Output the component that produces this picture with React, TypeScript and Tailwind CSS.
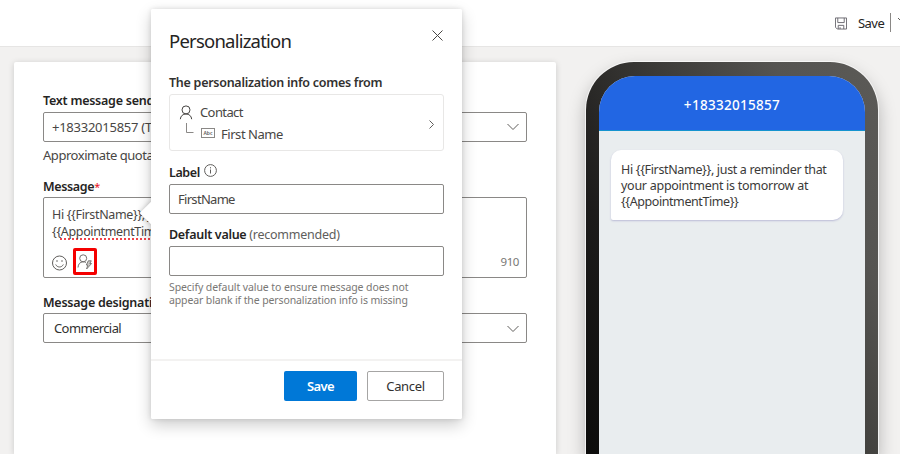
import React from "react";

function Chevron({ className = "" }: { className?: string }) {
  return (
    <svg className={className} width="14" height="8" viewBox="0 0 14 8" fill="none" stroke="#605e5c" strokeWidth="1">
      <path d="M1.500 1l5.500 5.500L12.500 1" />
    </svg>
  );
}

function Person({ className = "" }: { className?: string }) {
  return (
    <svg className={className} width="14" height="15" viewBox="0 0 14 15" fill="none" stroke="#484644" strokeWidth="1">
      <circle cx="7" cy="4.900" r="4" />
      <path d="M1.300 14.200c.3-3.300 2.600-5.200 5.700-5.200s5.400 1.900 5.700 5.200" />
    </svg>
  );
}

function PersonBolt() {
  return (
    <svg className="shrink-0" width="16" height="16" viewBox="0 0 16 16" fill="none" stroke="#716f6d" strokeWidth="1">
      <circle cx="6.200" cy="4.300" r="3.500" />
      <path d="M1 13.500c.2-3.400 2-5.500 5-5.700 1.200 0 2.100.2 2.900.7" />
      <path d="M11.300 6.800h3l-1.500 2.700h1.800l-5 5.500 1.200-4H9.300z" fill="#c8c6c4" strokeWidth=".9" />
    </svg>
  );
}

function Smile() {
  return (
    <svg width="16" height="16" viewBox="0 0 16 16" fill="none" stroke="#605e5c" strokeWidth="1">
      <circle cx="7.500" cy="8" r="7" />
      <path d="M3.700 9.500c1.500 3.300 6.100 3.300 7.600 0" />
      <circle cx="5" cy="6" r=".8" fill="#605e5c" stroke="none" />
      <circle cx="10" cy="6" r=".8" fill="#605e5c" stroke="none" />
    </svg>
  );
}

function Toolbar() {
  return (
    <header className="flex h-[47px] shrink-0 items-center border-b border-[#e6e5e4] bg-white pl-[835px]">
      <svg className="shrink-0" width="12" height="13" viewBox="0 0 13 13" fill="none" stroke="#66646b" strokeWidth="1">
        <path d="M.5 .5h12v12h-10l-2-2z" />
        <path d="M3 .5v5h7v-5M3.500 12.500v-4h6v4M5.500 10.500v2" />
      </svg>
      <span className="ml-[11px] w-[27px] shrink-0 text-[13px] leading-[18px] tracking-[-0.55px] text-[#252423]">Save</span>
      <span className="ml-[5px] mt-[-2px] h-[19px] w-px shrink-0 bg-[#8a8886]" />
      <svg className="mb-[6px] ml-[7px] shrink-0" width="8" height="6" viewBox="0 0 8 6" fill="none" stroke="#605e5c">
        <path d="M0 1l4 4 4-4" />
      </svg>
    </header>
  );
}

function FormCard() {
  return (
    <section className="ml-[14px] mt-[15px] flex h-[392px] w-[542px] shrink-0 flex-col rounded-t-[2px] bg-white pl-[29px] pr-[29px] pt-[29px] shadow-[0_1px_6px_rgba(0,0,0,0.16)]">
      <label className="h-[20px] text-[12.500px] font-semibold leading-[20px] tracking-[-0.25px] text-[#252423]">Text message sender</label>
      <div className="mt-px flex h-[30px] items-center justify-between rounded-[2px] border border-[#8a8886] pl-[8px] pr-[6px] pt-px text-[#484644]">
        <span className="text-[13px] tracking-[-0.25px]">+18332015857 (Toll free)</span>
        <Chevron className="mb-[2px]" />
      </div>
      <p className="mt-[3px] h-[20px] text-[13px] leading-[20px] tracking-[-0.45px] text-[#484644]">Approximate quota remaining</p>
      <label className="mt-[12px] h-[20px] text-[12.500px] font-semibold leading-[20px] tracking-[-0.35px] text-[#252423]">
        Message<span className="text-[11px] font-normal text-[#e81123]">*</span>
      </label>
      <div className="flex h-[81px] flex-col rounded-[2px] border border-[#8a8886] pl-[8px] pr-[7px] pt-[8px] text-[#484644]">
        <div className="h-[35px] text-[12.500px] leading-[17px] tracking-[-0.35px]">
          <p>Hi {"{{FirstName}}"}, just a reminder that</p>
          <p>
            {"{{"}
            <span className="underline decoration-[#f0444a] decoration-dotted decoration-[1.500px] underline-offset-[2px] [text-decoration-skip-ink:none]">AppointmentTime</span>
            {"}}"}
          </p>
        </div>
        <div className="mt-[10px] flex items-center">
          <Smile />
          <span className="ml-[5px] mt-[-3px] flex h-[27px] w-[24px] items-center justify-center rounded-[2px] border-[3px] border-[#f40000]">
            <PersonBolt />
          </span>
          <span className="ml-auto mt-[-2px] text-[11.500px] tracking-[-0.45px] text-[#797775]">910</span>
        </div>
      </div>
      <label className="mt-[14px] h-[20px] text-[12.500px] font-semibold leading-[21px] tracking-[-0.25px] text-[#252423]">Message designation</label>
      <div className="mt-px flex h-[30px] items-center justify-between rounded-[2px] border border-[#8a8886] pl-[10px] pr-[6px] pt-[2px] text-[#323130]">
        <span className="text-[13px] tracking-[-0.6px]">Commercial</span>
        <Chevron />
      </div>
    </section>
  );
}

function Phone() {
  return (
    <section className="ml-[30px] mt-[15px] flex h-[392px] w-[292px] shrink-0 flex-col rounded-t-[48px] bg-[linear-gradient(65deg,#0c0c0b_0%,#1c1b1a_25%,#3b3a37_52%,#555451_78%,#5b5a57_100%)] px-[13px] pt-[14px] shadow-[0_0_0_1px_rgba(255,255,255,0.7),0_8px_18px_rgba(0,0,0,0.28)]">
      <div className="flex flex-1 flex-col overflow-hidden rounded-t-[36px] bg-[#e9edef]">
        <div className="flex h-[55px] shrink-0 items-center justify-center border-b border-[#1593cf] bg-[#2266e3] pt-[4px] text-[13.500px] font-medium tracking-[0.3px] text-white">
          <span>+18332015857</span>
        </div>
        <div className="ml-[12px] mt-[19px] h-[70px] w-[232px] rounded-[10px] rounded-bl-[2px] bg-white pl-[10px] pt-[12px] text-[12.500px] leading-[16px] tracking-[-0.27px] text-[#3b3a39] shadow-[0_1px_2px_rgba(70,60,150,0.28)]">
          <p className="whitespace-nowrap tracking-[-0.34px]">Hi {"{{FirstName}}"}, just a reminder that</p>
          <p>your appointment is tomorrow at</p>
          <p className="tracking-[-0.42px]">{"{{AppointmentTime}}"}</p>
        </div>
      </div>
    </section>
  );
}

function Dialog() {
  return (
    <div role="dialog" className="absolute left-[151px] top-[9px] h-[410px] w-[311px] rounded-[2px] shadow-[0_6px_16px_rgba(0,0,0,0.2),0_0_5px_rgba(0,0,0,0.12)]">
      <span className="absolute left-[-8px] top-[196px] h-[16px] w-[16px] rotate-45 bg-white shadow-[0_0_5px_rgba(0,0,0,0.25)]" />
      <div className="relative flex h-full flex-col rounded-[2px] bg-white">
        <div className="flex h-[352px] flex-col border-b-[2px] border-[#f3f2f1] px-[18px]">
          <div className="mt-[18px] flex h-[28px] justify-between">
            <h1 className="text-[18.500px] leading-[28px] tracking-[-0.78px] text-[#252423]">Personalization</h1>
            <svg className="mr-px mt-[3px]" width="11" height="11" viewBox="0 0 11 11" fill="none" stroke="#484644">
              <path d="M.5 .5l10 10M10.500 .5l-10 10" />
            </svg>
          </div>
          <h2 className="mt-[18px] h-[20px] whitespace-nowrap text-[12.500px] font-semibold leading-[20px] tracking-[-0.27px] text-[#323130]">The personalization info comes from</h2>
          <div className="mt-px flex h-[57px] w-[275px] items-center justify-between rounded-[3px] border border-[#e8e7e6] pl-[9px] pr-[9px] text-[13px] text-[#484644]">
            <div className="flex flex-col pt-[3px]">
              <div className="flex h-[20px] items-center">
                <Person className="mb-px" />
                <span className="ml-[7px] mt-px tracking-[-0.6px]">Contact</span>
              </div>
              <div className="flex h-[23px] items-center">
                <svg className="mb-[12px] ml-[7px]" width="8" height="10" viewBox="0 0 8 10" fill="none" stroke="#8a8886">
                  <path d="M.5 0v9.500H7.500" />
                </svg>
                <span className="mb-[2px] ml-[7px] flex h-[10px] w-[14px] items-center justify-center border border-[#8a8886] text-[5px] font-semibold leading-none text-[#605e5c]">Abc</span>
                <span className="ml-[6px] mt-px tracking-[-0.45px]">First Name</span>
              </div>
            </div>
            <svg className="mt-[3px]" width="5" height="9" viewBox="0 0 5 9" fill="none" stroke="#605e5c">
              <path d="M.5 .5l4 4-4 4" />
            </svg>
          </div>
          <div className="mt-[12px] flex h-[20px] items-center">
            <span className="text-[12.500px] font-semibold tracking-[-0.4px] text-[#252423]">Label</span>
            <svg className="mb-[5px] ml-[4px]" width="13" height="13" viewBox="0 0 13 13" fill="none" stroke="#605e5c">
              <circle cx="6.500" cy="6.500" r="5.900" />
              <path d="M6.500 5.500v4M6.500 3.200v1.200" />
            </svg>
          </div>
          <div className="mt-px flex h-[30px] w-[275px] items-center rounded-[2px] border border-[#8a8886] pl-[8px] pt-[2px] text-[13px] tracking-[-0.7px] text-[#484644]">FirstName</div>
          <div className="mt-[11px] flex h-[20px] items-center pt-px text-[12.500px]">
            <span className="font-semibold tracking-[-0.3px] text-[#252423]">Default value</span>
            <span className="ml-[3px] tracking-[-0.25px] text-[#605e5c]">(recommended)</span>
          </div>
          <div className="mt-px h-[30px] w-[275px] rounded-[2px] border border-[#8a8886]" />
          <div className="mt-[5px] whitespace-nowrap text-[10.500px] leading-[13px] tracking-[-0.09px] text-[#797775]">
            <p>Specify default value to ensure message does not</p>
            <p className="tracking-[-0.12px]">appear blank if the personalization info is missing</p>
          </div>
        </div>
        <div className="flex justify-end gap-[10px] pr-[18px] pt-[10px]">
          <button className="h-[30px] w-[73px] rounded-[2px] bg-[#0078d7] pt-px text-[13px] font-semibold tracking-[-0.6px] text-white">Save</button>
          <button className="h-[30px] w-[77px] rounded-[2px] border border-[#a6a5a4] pt-px text-[13px] tracking-[-0.35px] text-[#323130]">Cancel</button>
        </div>
      </div>
    </div>
  );
}

export default function App() {
  return (
    <div className="relative flex h-[454px] w-[900px] flex-col overflow-hidden bg-[#f2f1f0] font-['Noto_Sans','Open_Sans',sans-serif]">
      <Toolbar />
      <main className="flex">
        <FormCard />
        <Phone />
      </main>
      <Dialog />
    </div>
  );
}
